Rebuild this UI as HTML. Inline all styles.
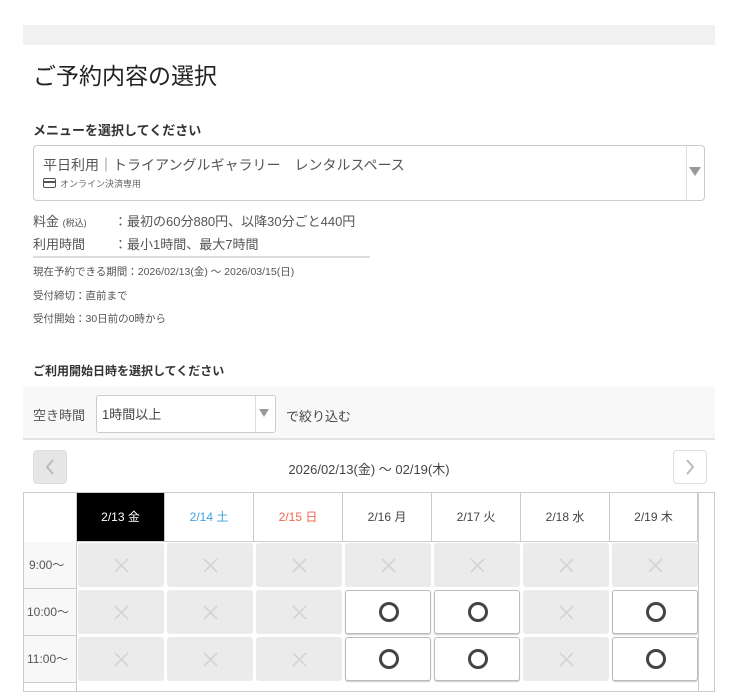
<!DOCTYPE html>
<html><head><meta charset="utf-8"><style>
*{margin:0;padding:0;box-sizing:border-box}
body{width:738px;height:680px;overflow:hidden;background:#fff;font-family:"Liberation Sans","Noto Sans CJK JP",sans-serif;color:#333;position:relative}
.a{position:absolute;white-space:nowrap}
.cell{position:absolute;width:86px;height:44px;border-radius:3px;background:#ebebeb}
.cell svg{position:absolute;left:36px;top:15px}
.ok{background:#fff;border:1px solid #bbb;box-shadow:0 1px 1px #ccc}
.ok:after{content:"";position:absolute;left:33px;top:11px;width:20px;height:20px;border:3px solid #444;border-radius:50%;box-sizing:border-box}
.hd{position:absolute;top:493px;height:48px;line-height:48px;text-align:center;font-size:12px;color:#444;border-right:1px solid #ccc}
.tm{position:absolute;left:24px;width:52px;height:47px;line-height:47px;font-size:12px;color:#555;background:#f8f8f8;border-bottom:1px solid #ccc;padding-left:5px}
</style></head><body>
<div class="a" style="left:23px;top:25px;width:692px;height:20px;background:#f1f1f1"></div>
<div class="a" style="left:33px;top:57px;font-size:23px;color:#222">ご予約内容の選択</div>
<div class="a" style="left:33px;top:120px;font-size:13px;font-weight:bold;color:#333">メニューを選択してください</div>
<div class="a" style="left:33px;top:145px;width:672px;height:56px;border:1px solid #ccc;border-radius:4px"></div>
<div class="a" style="left:686px;top:146px;width:1px;height:54px;background:#ddd"></div>
<div class="a" style="left:689px;top:167px;width:0;height:0;border-left:6px solid transparent;border-right:6px solid transparent;border-top:9px solid #999"></div>
<div class="a" style="left:43px;top:155px;font-size:14px;color:#555">平日利用｜トライアングルギャラリー　レンタルスペース</div>
<div class="a" style="left:43px;top:178px;width:13px;height:10px;border:1.5px solid #555;border-radius:2px"></div>
<div class="a" style="left:44px;top:181px;width:11px;height:1.5px;background:#555"></div>
<div class="a" style="left:60px;top:177px;font-size:9px;color:#666">オンライン決済専用</div>
<div class="a" style="left:33px;top:211px;font-size:13px;color:#555">料金 <span style="font-size:9px">(税込)</span></div>
<div class="a" style="left:114px;top:211px;font-size:13px;color:#555">：最初の60分880円、以降30分ごと440円</div>
<div class="a" style="left:33px;top:234px;font-size:13px;color:#555">利用時間</div>
<div class="a" style="left:114px;top:234px;font-size:13px;color:#555">：最小1時間、最大7時間</div>
<div class="a" style="left:33px;top:256px;width:337px;height:2px;background:#ddd"></div>
<div class="a" style="left:33px;top:264px;font-size:10.5px;color:#555">現在予約できる期間：2026/02/13(金) ～ 2026/03/15(日)</div>
<div class="a" style="left:33px;top:288px;font-size:10.5px;color:#555">受付締切：直前まで</div>
<div class="a" style="left:33px;top:311px;font-size:10.5px;color:#555">受付開始：30日前の0時から</div>
<div class="a" style="left:33px;top:362px;font-size:12px;font-weight:bold;color:#333">ご利用開始日時を選択してください</div>
<div class="a" style="left:23px;top:387px;width:692px;height:53px;background:#f8f8f8;border-bottom:2px solid #e3e3e3"></div>
<div class="a" style="left:33px;top:405px;font-size:13px;color:#555">空き時間</div>
<div class="a" style="left:96px;top:395px;width:180px;height:38px;border:1px solid #ccc;border-radius:3px;background:#fff"></div>
<div class="a" style="left:255px;top:396px;width:1px;height:36px;background:#ddd"></div>
<div class="a" style="left:259px;top:409px;width:0;height:0;border-left:5px solid transparent;border-right:5px solid transparent;border-top:8px solid #999"></div>
<div class="a" style="left:102px;top:404px;font-size:13px;color:#444">1時間以上</div>
<div class="a" style="left:286px;top:406px;font-size:13px;color:#444">で絞り込む</div>
<div class="a" style="left:33px;top:450px;width:34px;height:34px;background:#e6e6e6;border:1px solid #ddd;border-radius:4px"><svg width="32" height="32" style="position:absolute;left:0;top:0"><path d="M19 9 L13 16 L19 23" fill="none" stroke="#bbb" stroke-width="2"/></svg></div>
<div class="a" style="left:673px;top:450px;width:34px;height:34px;background:#fff;border:1px solid #ddd;border-radius:4px"><svg width="32" height="32" style="position:absolute;left:0;top:0"><path d="M13 9 L19 16 L13 23" fill="none" stroke="#bbb" stroke-width="2"/></svg></div>
<div class="a" style="left:0;width:738px;top:459px;text-align:center;font-size:13px;color:#444">2026/02/13(金) ～ 02/19(木)</div>
<div class="a" style="left:23px;top:492px;width:692px;height:200px;border:1px solid #ccc"></div>
<div class="a" style="left:76px;top:541px;width:622px;height:1px;background:#ccc"></div>
<div class="a" style="left:76px;top:492px;width:1px;height:200px;background:#ccc"></div>
<div class="a" style="left:698px;top:492px;width:1px;height:200px;background:#ccc"></div>
<div class="hd" style="left:77px;width:88px;background:#000;color:#fff">2/13 金</div>
<div class="hd" style="left:165px;width:89px;color:#3ea0e0">2/14 土</div>
<div class="hd" style="left:254px;width:89px;color:#f0664a">2/15 日</div>
<div class="hd" style="left:343px;width:89px">2/16 月</div>
<div class="hd" style="left:432px;width:89px">2/17 火</div>
<div class="hd" style="left:521px;width:89px">2/18 水</div>
<div class="hd" style="left:610px;width:88px">2/19 木</div>
<div class="tm" style="top:542px">9:00〜</div>
<div class="tm" style="top:589px;padding-left:3px">10:00〜</div>
<div class="tm" style="top:636px;padding-left:3px">11:00〜</div>
<svg width="0" height="0" style="position:absolute"><defs><g id="x"><path d="M1 1 L14 14 M14 1 L1 14" stroke="#d4d4d4" stroke-width="1.6"/></g></defs></svg>
<div class="cell" style="left:78px;top:543px"><svg width="15" height="15"><use href="#x"/></svg></div><div class="cell" style="left:167px;top:543px"><svg width="15" height="15"><use href="#x"/></svg></div><div class="cell" style="left:256px;top:543px"><svg width="15" height="15"><use href="#x"/></svg></div><div class="cell" style="left:345px;top:543px"><svg width="15" height="15"><use href="#x"/></svg></div><div class="cell" style="left:434px;top:543px"><svg width="15" height="15"><use href="#x"/></svg></div><div class="cell" style="left:523px;top:543px"><svg width="15" height="15"><use href="#x"/></svg></div><div class="cell" style="left:612px;top:543px"><svg width="15" height="15"><use href="#x"/></svg></div>
<div class="cell" style="left:78px;top:590px"><svg width="15" height="15"><use href="#x"/></svg></div><div class="cell" style="left:167px;top:590px"><svg width="15" height="15"><use href="#x"/></svg></div><div class="cell" style="left:256px;top:590px"><svg width="15" height="15"><use href="#x"/></svg></div><div class="cell ok" style="left:345px;top:590px"></div><div class="cell ok" style="left:434px;top:590px"></div><div class="cell" style="left:523px;top:590px"><svg width="15" height="15"><use href="#x"/></svg></div><div class="cell ok" style="left:612px;top:590px"></div>
<div class="cell" style="left:78px;top:637px"><svg width="15" height="15"><use href="#x"/></svg></div><div class="cell" style="left:167px;top:637px"><svg width="15" height="15"><use href="#x"/></svg></div><div class="cell" style="left:256px;top:637px"><svg width="15" height="15"><use href="#x"/></svg></div><div class="cell ok" style="left:345px;top:637px"></div><div class="cell ok" style="left:434px;top:637px"></div><div class="cell" style="left:523px;top:637px"><svg width="15" height="15"><use href="#x"/></svg></div><div class="cell ok" style="left:612px;top:637px"></div>
</body></html>
